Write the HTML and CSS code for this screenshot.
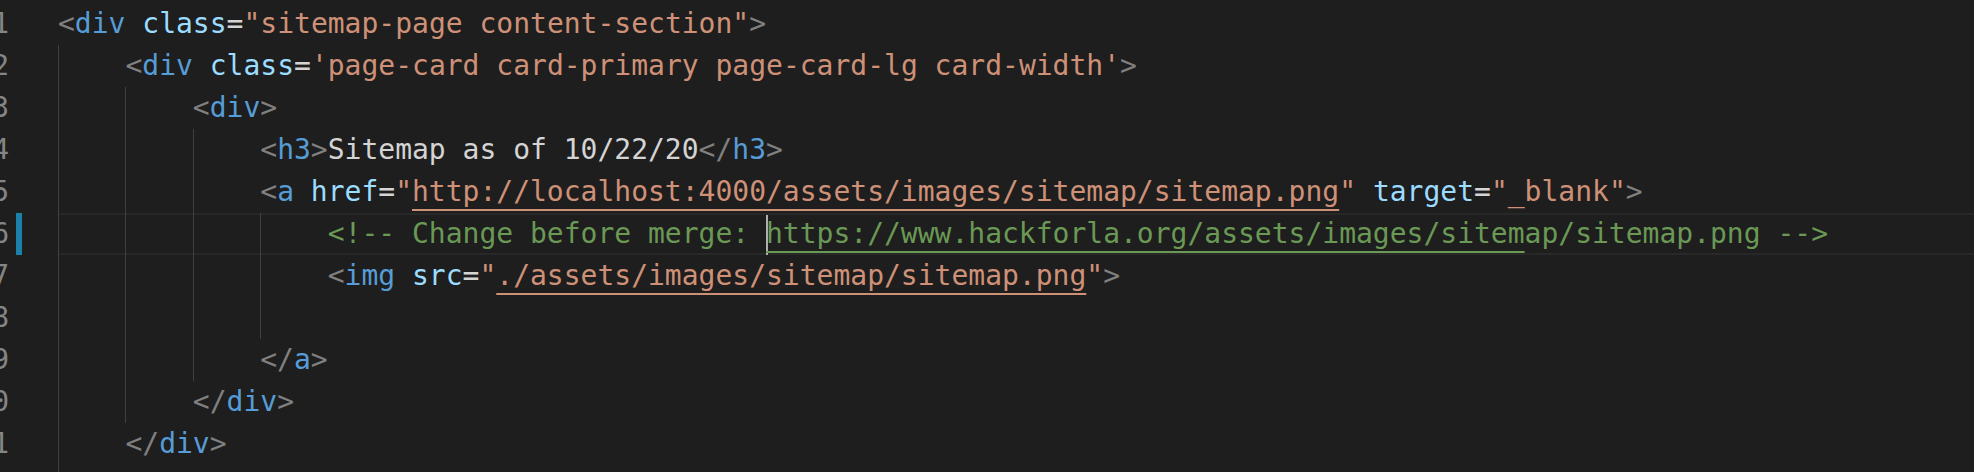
FILE: index.html
```html
<!DOCTYPE html>
<html lang="en">
<head>
    <meta charset="UTF-8">
    <title>sitemap.html</title>
    <link rel="stylesheet" href="styles.css">
</head>
<body>
    <div class="editor">
        <div class="line">
            <span class="gutter"><span class="num">1</span><span class="mark"></span></span>
            <span class="code"><span class="p">&lt;</span><span class="t">div</span> <span class="a">class</span><span class="o">=</span><span class="s">"sitemap-page content-section"</span><span class="p">&gt;</span></span>
        </div>
        <div class="line">
            <span class="gutter"><span class="num">2</span><span class="mark"></span></span>
            <span class="code"><span class="ind"></span><span class="p">&lt;</span><span class="t">div</span> <span class="a">class</span><span class="o">=</span><span class="s">'page-card card-primary page-card-lg card-width'</span><span class="p">&gt;</span></span>
        </div>
        <div class="line">
            <span class="gutter"><span class="num">3</span><span class="mark"></span></span>
            <span class="code"><span class="ind"></span><span class="ind"></span><span class="p">&lt;</span><span class="t">div</span><span class="p">&gt;</span></span>
        </div>
        <div class="line">
            <span class="gutter"><span class="num">4</span><span class="mark"></span></span>
            <span class="code"><span class="ind"></span><span class="ind"></span><span class="ind"></span><span class="p">&lt;</span><span class="t">h3</span><span class="p">&gt;</span><span class="o">Sitemap as of 10/22/20</span><span class="p">&lt;/</span><span class="t">h3</span><span class="p">&gt;</span></span>
        </div>
        <div class="line">
            <span class="gutter"><span class="num">5</span><span class="mark"></span></span>
            <span class="code"><span class="ind"></span><span class="ind"></span><span class="ind"></span><span class="p">&lt;</span><span class="t">a</span> <span class="a">href</span><span class="o">=</span><span class="s">"<span class="u">http://localhost:4000/assets/images/sitemap/sitemap.png</span>"</span> <span class="a">target</span><span class="o">=</span><span class="s">"_blank"</span><span class="p">&gt;</span></span>
        </div>
        <div class="line">
            <span class="gutter"><span class="num">6</span><span class="mark modified"></span></span>
            <span class="code active"><span class="ind"></span><span class="ind"></span><span class="ind"></span><span class="ind"></span><span class="c">&lt;!-- Change before merge: <span class="cursor"></span><span class="u">https://www.hackforla.org/assets/images/sitem</span>ap/sitemap.png --&gt;</span></span>
        </div>
        <div class="line">
            <span class="gutter"><span class="num">7</span><span class="mark"></span></span>
            <span class="code"><span class="ind"></span><span class="ind"></span><span class="ind"></span><span class="ind"></span><span class="p">&lt;</span><span class="t">img</span> <span class="a">src</span><span class="o">=</span><span class="s">"<span class="u">./assets/images/sitemap/sitemap.png</span>"</span><span class="p">&gt;</span></span>
        </div>
        <div class="line">
            <span class="gutter"><span class="num">8</span><span class="mark"></span></span>
            <span class="code"><span class="ind"></span><span class="ind"></span><span class="ind"></span><span class="ind"></span></span>
        </div>
        <div class="line">
            <span class="gutter"><span class="num">9</span><span class="mark"></span></span>
            <span class="code"><span class="ind"></span><span class="ind"></span><span class="ind"></span><span class="p">&lt;/</span><span class="t">a</span><span class="p">&gt;</span></span>
        </div>
        <div class="line">
            <span class="gutter"><span class="num">10</span><span class="mark"></span></span>
            <span class="code"><span class="ind"></span><span class="ind"></span><span class="p">&lt;/</span><span class="t">div</span><span class="p">&gt;</span></span>
        </div>
        <div class="line">
            <span class="gutter"><span class="num">11</span><span class="mark"></span></span>
            <span class="code"><span class="ind"></span><span class="p">&lt;/</span><span class="t">div</span><span class="p">&gt;</span></span>
        </div>
        <div class="line">
            <span class="gutter"><span class="num">12</span><span class="mark"></span></span>
            <span class="code"><span class="ind"></span></span>
        </div>
    </div>
</body>
</html>
```

FILE: styles.css
```css
* {
    margin: 0;
    padding: 0;
    box-sizing: border-box;
}

html, body {
    height: 100%;
}

body {
    background-color: #1e1e1e;
    overflow: hidden;
}

.editor {
    padding-top: 3px;
    font-family: "DejaVu Sans Mono", "Liberation Mono", monospace;
    font-size: 28px;
    line-height: 42px;
    color: #d4d4d4;
}

.line {
    display: flex;
    height: 42px;
}

.gutter {
    flex: 0 0 58px;
    display: flex;
}

.num {
    flex: 0 0 34px;
    margin-left: -25px;
    text-align: right;
    color: #858585;
}

.mark {
    flex: 0 0 6px;
    margin-left: 7px;
}

.mark.modified {
    background-color: #1b81a8;
}

.code {
    flex: 1;
    white-space: pre;
}

.code.active {
    box-shadow: inset 0 2px 0 #282828, inset 0 -2px 0 #282828;
}

.ind {
    display: inline-block;
    width: 4ch;
    height: 42px;
    vertical-align: top;
    box-shadow: inset 1px 0 0 #404040;
}

.p { color: #808080; }
.t { color: #569cd6; }
.a { color: #9cdcfe; }
.o { color: #d4d4d4; }
.s { color: #ce9178; }
.c { color: #6a9955; }

.u {
    text-decoration: underline;
    text-decoration-thickness: 2px;
    text-underline-offset: 8px;
}

.cursor {
    display: inline-block;
    width: 2px;
    height: 40px;
    margin-right: -2px;
    vertical-align: top;
    margin-top: 2px;
    background-color: #aeafad;
}
```
